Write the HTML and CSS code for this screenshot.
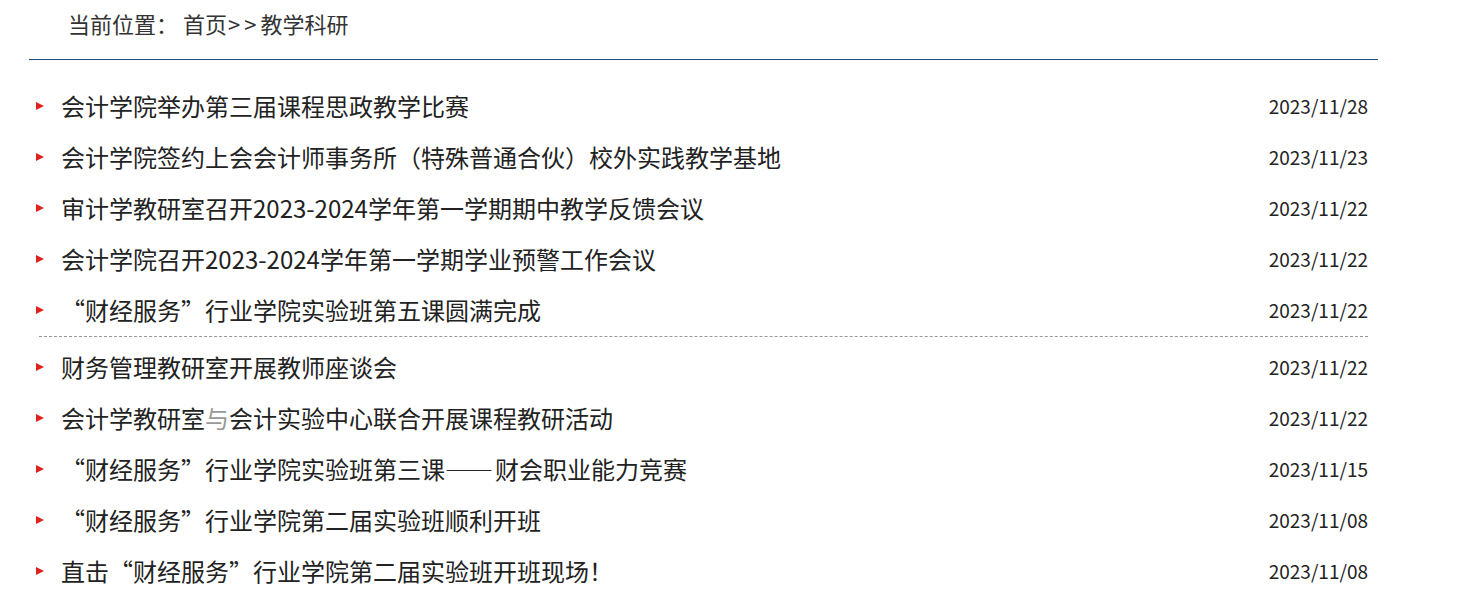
FILE: index.html
```html
<!DOCTYPE html>
<html lang="zh-CN">
<head>
  <meta charset="UTF-8">
  <title>教学科研</title>
  <link rel="stylesheet" href="styles.css">
</head>
<body>
  <div class="main">
    <div class="location">
      当前位置： <a href="#">首页</a><span class="sep">&gt;&gt;</span><a href="#">教学科研</a>
    </div>

    <ul class="news-list">
      <li><i class="arrow"></i><a href="#">会计学院举办第三届课程思政教学比赛</a><span class="date">2023/11/28</span></li>
      <li><i class="arrow"></i><a href="#">会计学院签约上会会计师事务所（特殊普通合伙）校外实践教学基地</a><span class="date">2023/11/23</span></li>
      <li><i class="arrow"></i><a href="#">审计学教研室召开2023-2024学年第一学期期中教学反馈会议</a><span class="date">2023/11/22</span></li>
      <li><i class="arrow"></i><a href="#">会计学院召开2023-2024学年第一学期学业预警工作会议</a><span class="date">2023/11/22</span></li>
      <li><i class="arrow"></i><a href="#">“财经服务”行业学院实验班第五课圆满完成</a><span class="date">2023/11/22</span></li>
    </ul>
    <ul class="news-list">
      <li><i class="arrow"></i><a href="#">财务管理教研室开展教师座谈会</a><span class="date">2023/11/22</span></li>
      <li><i class="arrow"></i><a href="#">会计学教研室<span class="grey">与</span>会计实验中心联合开展课程教研活动</a><span class="date">2023/11/22</span></li>
      <li><i class="arrow"></i><a href="#">“财经服务”行业学院实验班第三课<span class="dash">——</span>财会职业能力竞赛</a><span class="date">2023/11/15</span></li>
      <li><i class="arrow"></i><a href="#">“财经服务”行业学院第二届实验班顺利开班</a><span class="date">2023/11/08</span></li>
      <li><i class="arrow"></i><a href="#">直击“财经服务”行业学院第二届实验班开班现场！</a><span class="date">2023/11/08</span></li>
    </ul>
  </div>
</body>
</html>
```

FILE: styles.css
```css
body {
  margin: 0;
  font-family: "Noto Sans CJK SC", "Noto Sans", sans-serif;
  color: #333;
  background: #fff;
}

a {
  color: #333;
  text-decoration: none;
}

.main {
  width: 1349px;
  margin-left: 29px;
}

.location {
  height: 59px;
  line-height: 46px;
  padding-left: 39px;
  font-size: 22px;
  border-bottom: 1px solid #1d4c86;
}

.location .sep {
  letter-spacing: 4px;
  margin-left: 1px;
}

.news-list {
  list-style: none;
  margin: 0 10px;
  padding: 5px 0 0;
}

.news-list:first-of-type {
  padding-top: 21px;
  border-bottom: 1px dashed #999;
}

.news-list li {
  display: flex;
  align-items: center;
  box-sizing: border-box;
  height: 51px;
  padding-bottom: 3px;
  font-size: 24px;
}

.news-list li a {
  color: #222;
}

.arrow {
  width: 0;
  height: 0;
  margin-left: -3px;
  margin-right: 17px;
  margin-top: 2px;
  border-left: 8px solid #e0201b;
  border-top: 4.5px solid transparent;
  border-bottom: 4.5px solid transparent;
}

.grey {
  color: #999;
}

.dash {
  letter-spacing: 2px;
}

.date {
  margin-left: auto;
  font-size: 19px;
  color: #222;
}
```
